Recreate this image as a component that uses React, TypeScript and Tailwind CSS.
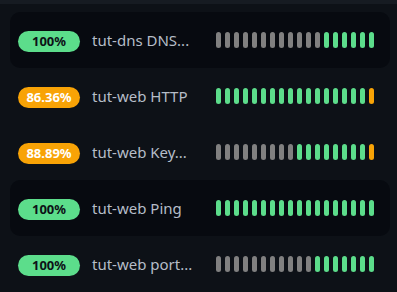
import React from "react";

type Row = { pct: string; color: "green" | "orange"; name: string; beats: string };

const rows: Row[] = [
  { pct: "100%", color: "green", name: "tut-dns DNS...", beats: "gggggggggggguuuuuu" },
  { pct: "86.36%", color: "orange", name: "tut-web HTTP", beats: "uuuuuuuuuuuuuuuuuo" },
  { pct: "88.89%", color: "orange", name: "tut-web Key...", beats: "ggggggggguuuuuuuuo" },
  { pct: "100%", color: "green", name: "tut-web Ping", beats: "uuuuuuuuuuuuuuuuuu" },
  { pct: "100%", color: "green", name: "tut-web port...", beats: "ggggggggggguuuuuuu" },
];

const hl = [true, false, false, true, false];

export default function App() {
  return (
    <div className="w-[397px] h-[292px] bg-[#0d1117] overflow-hidden" style={{ fontFamily: '"Noto Sans", "Open Sans", sans-serif' }}>
      <div className="h-[4px] bg-[#161b22]" />
      <div className="pt-[8px] pl-[10px] pr-[7px] flex flex-col">
        {rows.map((r, i) => (
          <div
            key={i}
            className={`h-[56px] flex items-center pl-[8px] pr-[16px] rounded-[10px] ${hl[i] ? "bg-[#070a10]" : ""}`}
          >
            <div
              className={`w-[62px] h-[21px] rounded-full flex items-center justify-center text-[13px] font-bold leading-none mt-[3px] ${
                r.color === "green" ? "bg-[#5cdd8b] text-[#0d1117]" : "bg-[#f8a306] text-white"
              }`}
            >
              {r.pct}
            </div>
            <div className="ml-[12px] text-[15px] text-[#b5bdc8] flex-1 leading-none">{r.name}</div>
            <div className="flex gap-[4px]">
              {r.beats.split("").map((b, j) => (
                <div
                  key={j}
                  className={`w-[5px] h-[16px] rounded-full ${
                    b === "u" ? "bg-[#5cdd8b]" : b === "o" ? "bg-[#f8a306]" : "bg-[#808080]"
                  }`}
                />
              ))}
            </div>
          </div>
        ))}
      </div>
    </div>
  );
}
